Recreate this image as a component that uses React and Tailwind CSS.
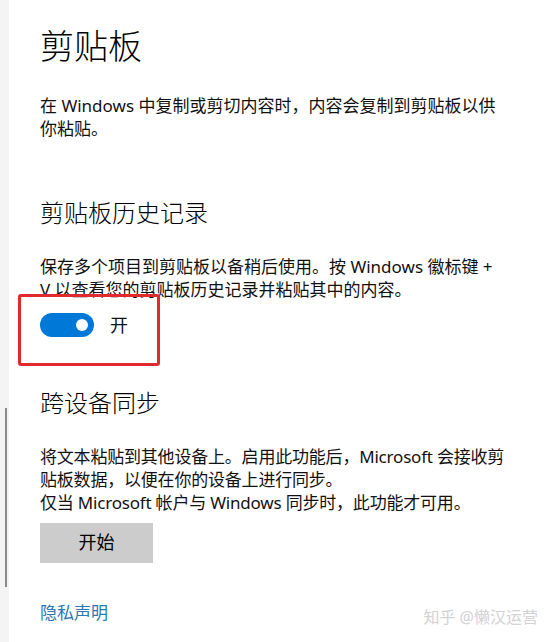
import React from "react";

const font = "font-['Noto_Sans','Noto_Sans_CJK_SC',sans-serif]";

export default function App() {
  return (
    <div className={`w-[546px] h-[642px] bg-white flex overflow-hidden relative ${font} text-[#111]`}>
      <div className="w-[9px] h-full bg-[#f4f4f4] pt-[408px] shrink-0">
        <div className="ml-[5px] w-[2px] h-[179px] bg-[#8a8a8a]" />
      </div>
      <div className="flex-1 pl-[31px] pt-[26px] flex flex-col items-start">
        <h1 className="text-[34px] leading-[40px] font-light text-black">剪贴板</h1>
        <p className="mt-[28px] text-[17px] leading-[23px]">
          在 Windows 中复制或剪切内容时，内容会复制到剪贴板以供
          <br />
          你粘贴。
        </p>

        <h2 className="mt-[57px] text-[24px] leading-[32px] font-light text-black">剪贴板历史记录</h2>
        <p className="mt-[26px] text-[17px] leading-[23px]">
          保存多个项目到剪贴板以备稍后使用。按 Windows 徽标键 +
          <br />
          V 以查看您的剪贴板历史记录并粘贴其中的内容。
        </p>

        <div className="relative mt-[11.5px] flex items-center gap-[16px]">
          <div className="w-[54px] h-[24px] rounded-full bg-[#0078d7] flex items-center justify-end pr-[6px]">
            <div className="w-[12px] h-[12px] rounded-full bg-white" />
          </div>
          <span className="text-[18px] leading-[24px]">开</span>
          <div className="absolute left-[-22px] top-[-19px] w-[142px] h-[72px] border-[3px] border-[#e02a2e] rounded-[3px]" />
        </div>

        <h2 className="mt-[50.5px] text-[24px] leading-[32px] font-light text-black">跨设备同步</h2>
        <p className="mt-[26px] text-[17px] leading-[23px] tracking-[-0.2px]">
          将文本粘贴到其他设备上。启用此功能后，Microsoft 会接收剪
          <br />
          贴板数据，以便在你的设备上进行同步。
          <br />
          仅当 Microsoft 帐户与 Windows 同步时，此功能才可用。
        </p>

        <button className="mt-[8.5px] w-[113px] h-[40px] bg-[#cccccc] text-[18px] text-black flex items-center justify-center">
          开始
        </button>

        <a className="mt-[38px] text-[17px] leading-[23px] text-[#2a78b4]">隐私声明</a>
      </div>
      <div className="absolute right-[8px] top-[606px] text-[16px] leading-[22px] text-[#d2d2d2]">
        知乎 @懒汉运营
      </div>
    </div>
  );
}
